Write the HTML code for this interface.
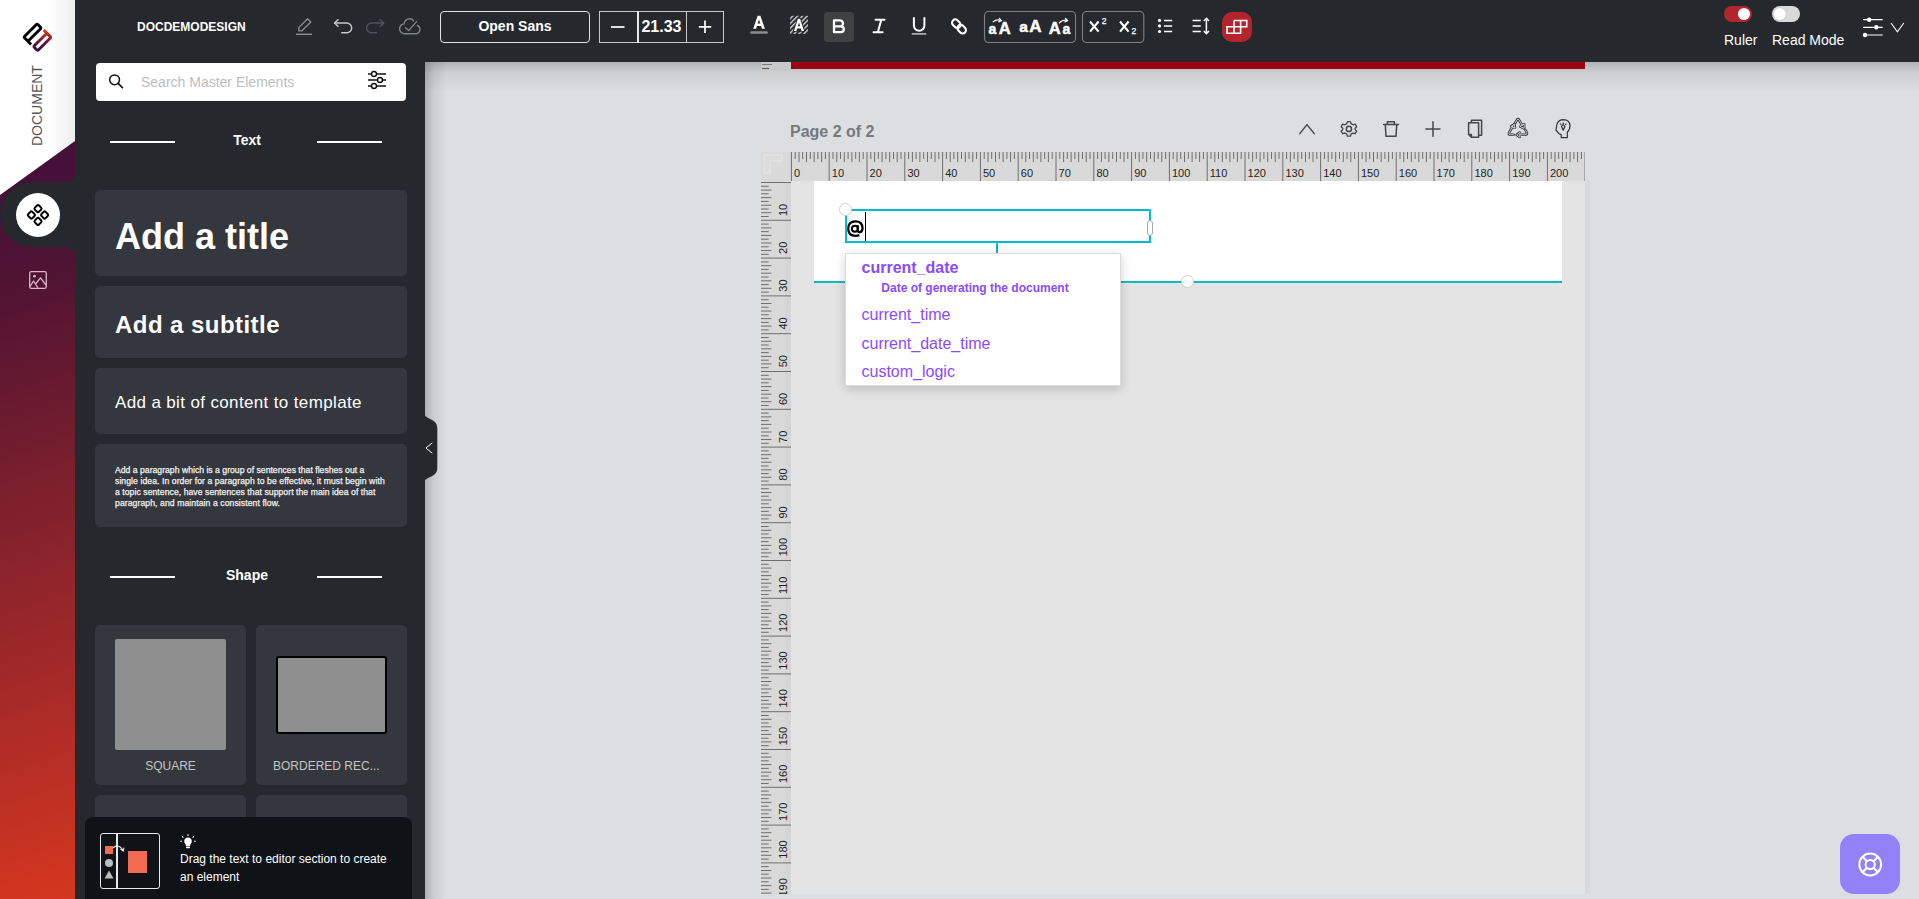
<!DOCTYPE html>
<html><head><meta charset="utf-8">
<style>
*{box-sizing:border-box}
html,body{margin:0;padding:0}
body{width:1919px;height:899px;overflow:hidden;position:relative;background:#dbdfe2;font-family:"Liberation Sans",sans-serif}
.a{position:absolute}
svg{display:block;overflow:visible}
/* sidebar */
#side{left:0;top:0;width:75px;height:899px;background:linear-gradient(161deg,#340b37 0px,#46103a 180px,#521432 285px,#7c202d 474px,#a62a28 664px,#cf3520 843px,#d5371f 875px)}
#sidewhite{left:0;top:0;width:75px;height:200px;background:linear-gradient(to right,#fff 0,#fff 50px,#f7f7f7 62px,#ececec 74px,#f2f2f2 75px);clip-path:polygon(0 0,75px 0,75px 141px,0 195px)}
/* panel */
#panel{left:75px;top:62px;width:350px;height:837px;background:#25282d}
#topbar{left:75px;top:0;width:1844px;height:62px;background:#25282d}
.card{position:absolute;left:95px;width:312px;background:#34373d;border-radius:5px}
.hline{position:absolute;height:2px;width:65px;background:#fff}
.ttl{position:absolute;color:#fff;font-weight:700;font-size:13px;line-height:16px;white-space:nowrap}
</style></head>
<body>
<!-- SIDEBAR -->
<div id="side" class="a"></div>
<div id="sidewhite" class="a"></div>
<!-- logo -->
<svg class="a" style="left:18px;top:18px" width="40" height="40" viewBox="0 0 40 40">
  <defs><linearGradient id="lg1" gradientUnits="userSpaceOnUse" x1="16" y1="33" x2="33" y2="16"><stop offset="0" stop-color="#24064f"/><stop offset="0.5" stop-color="#6a1438"/><stop offset="0.8" stop-color="#b92a22"/><stop offset="1" stop-color="#e53b1a"/></linearGradient></defs>
  <g fill="none" stroke-width="2.7" stroke-linejoin="round" transform="translate(19.4 19.4) scale(1.07) translate(-19.4 -19.4)">
    <path transform="translate(14.85 14.85) rotate(-45)" stroke="#000" d="M-8.8 6.9 V-1.5 Q-8.8 -2.75 -7.55 -2.75 H7.55 Q8.8 -2.75 8.8 -1.5 V1.5 Q8.8 2.75 7.55 2.75 H-8.8"/>
    <path transform="translate(23.95 23.6) rotate(-45)" stroke="url(#lg1)" d="M8.8 -6.9 V1.5 Q8.8 2.75 7.55 2.75 H-7.55 Q-8.8 2.75 -8.8 1.5 V-1.5 Q-8.8 -2.75 -7.55 -2.75 H8.8"/>
  </g>
</svg>
<div class="a" style="left:30px;top:146px;width:0;height:0"><div style="position:absolute;left:0;top:0;transform-origin:0 0;transform:rotate(-90deg);font-size:14px;line-height:14px;color:#555;white-space:nowrap;letter-spacing:0px">DOCUMENT</div></div>
<!-- active tab -->
<div class="a" style="left:0;top:182px;width:75px;height:65px;background:#25282d;border-radius:33px 0 0 33px"></div>
<div class="a" style="left:67px;top:174px;width:8px;height:8px;background:radial-gradient(circle at 0 0,transparent 7.5px,#25282d 8px)"></div>
<div class="a" style="left:67px;top:247px;width:8px;height:8px;background:radial-gradient(circle at 0 100%,transparent 7.5px,#25282d 8px)"></div>
<div class="a" style="left:16px;top:193px;width:44px;height:44px;border-radius:50%;background:#fff"></div>
<svg class="a" style="left:26px;top:203px" width="24" height="24" viewBox="0 0 24 24">
  <g fill="none" stroke="#000" stroke-width="2" stroke-linejoin="round" transform="translate(12 12)">
    <rect x="-2.9" y="-9.3" width="5.8" height="5.8" rx="1.4" transform="rotate(45 0 -6.4)"/>
    <rect x="-9.5" y="-2.9" width="5.8" height="5.8" rx="1.4" transform="rotate(45 -6.6 0)"/>
    <rect x="3.7" y="-2.9" width="5.8" height="5.8" rx="1.4" transform="rotate(45 6.6 0)"/>
    <rect x="-2.9" y="3.5" width="5.8" height="5.8" rx="1.4" transform="rotate(45 0 6.4)"/>
  </g>
</svg>
<!-- image icon -->
<svg class="a" style="left:29px;top:271px" width="18" height="18" viewBox="0 0 18 18">
  <g fill="none" stroke="#d6b6c8" stroke-width="1.3" stroke-linejoin="round">
    <rect x="0.7" y="0.7" width="16.6" height="16.6" rx="1.5"/>
    <path d="M1 15.5 L4.5 10 L9 17"/>
    <path d="M6.5 13 L11.5 6.8 L17 14"/>
  </g>
  <circle cx="5.5" cy="5.2" r="1.4" fill="#d6b6c8"/>
</svg>

<!-- TOP BAR -->
<div id="topbar" class="a"></div>
<div class="a" style="left:137px;top:21px;font-size:12px;line-height:12px;font-weight:700;color:#fff;white-space:nowrap">DOCDEMODESIGN</div>
<div class="a" style="left:440px;top:11px;width:150px;height:32px;border:1px solid #e2e2e2;border-radius:4px"></div>
<div class="a" style="left:440px;top:19px;width:150px;text-align:center;font-size:14px;line-height:14px;font-weight:700;color:#fff;white-space:nowrap">Open Sans</div>
<div class="a" style="left:599px;top:11px;width:125px;height:32px;border:1px solid #c9c9c9"></div>
<div class="a" style="left:637px;top:11px;width:1.5px;height:32px;background:#e6e6e6"></div>
<div class="a" style="left:686px;top:11px;width:1px;height:32px;background:#c9c9c9"></div>
<div class="a" style="left:637px;top:19px;width:49px;text-align:center;font-size:16px;line-height:16px;font-weight:700;color:#fff;white-space:nowrap">21.33</div>
<svg class="a" style="left:0;top:0" width="1919" height="62" viewBox="0 0 1919 62">
  <!-- pencil -->
  <g fill="none" stroke="#8b8e91" stroke-width="1.3" stroke-linejoin="round">
    <path d="M298.8 30.8 L298.8 27.6 L307.6 18.8 L310.8 22 L302 30.8 Z"/>
  </g>
  <path d="M296 34.3 H312" stroke="#8b8e91" stroke-width="1.4"/>
  <!-- undo -->
  <g fill="none" stroke="#c8c9ca" stroke-width="1.4" stroke-linejoin="round">
    <path d="M338.5 19.2 L334.5 23 L338.5 26.8"/>
    <path d="M334.8 23 H346.8 A4.9 4.9 0 0 1 346.8 32.8 H341.2"/>
  </g>
  <!-- redo -->
  <g fill="none" stroke="#50545a" stroke-width="1.4" stroke-linejoin="round">
    <path d="M379.8 19.2 L383.8 23 L379.8 26.8"/>
    <path d="M383.5 23 H371.5 A4.9 4.9 0 0 0 371.5 32.8 H377.1"/>
  </g>
  <!-- cloud check -->
  <g fill="none" stroke="#7f8489" stroke-width="1.4" stroke-linejoin="round" stroke-linecap="round">
    <path d="M413.6 20.8 A5.3 5.3 0 0 0 404.2 23.9 A4.4 4.4 0 0 0 404.8 33.7 H415.6 A4.3 4.3 0 0 0 417.4 25.5"/>
    <path d="M405.6 27.8 L408.6 30.6 L416.6 21.6"/>
  </g>
  <!-- minus plus -->
  <path d="M611 27 H624.5" stroke="#fff" stroke-width="1.7"/>
  <path d="M698.8 26.9 H711.2 M705 20.6 V33.1" stroke="#fff" stroke-width="1.7"/>
  <!-- text color A -->
  <path fill="#fff" fill-rule="evenodd" d="M753.2 28.8 L757.6 15.8 L760.4 15.8 L764.9 28.8 L762 28.8 L761.1 26 L756.9 26 L756 28.8 Z M757.7 23.6 L760.3 23.6 L759 19.4 Z"/>
  <path d="M751.5 32.4 H766.6" stroke="#8a8d90" stroke-width="2.5" stroke-linecap="round"/>
  <!-- highlight -->
  <defs>
    <pattern id="hatch" width="3.4" height="3.4" patternUnits="userSpaceOnUse" patternTransform="rotate(45)">
      <rect width="1.4" height="3.4" fill="#d0d0d0"/>
    </pattern>
    <clipPath id="hclip"><rect x="790" y="15.8" width="18" height="18.2"/></clipPath>
  </defs>
  <rect x="790" y="15.8" width="18" height="18.2" fill="url(#hatch)"/>
  <path fill="#25282d" d="M792.6 31.8 L797.4 17.6 L800.6 17.6 L805.4 31.8 Z"/>
  <path fill="#fff" fill-rule="evenodd" d="M793.9 31 L797.9 18.8 L800.1 18.8 L804.1 31 L801.6 31 L800.8 28.5 L797.2 28.5 L796.4 31 Z M797.9 26.3 L800.1 26.3 L799 22.4 Z"/>
  <!-- bold -->
  <rect x="824" y="12" width="30" height="30" rx="4" fill="#404142"/>
  <path fill="none" stroke="#fff" stroke-width="2.3" stroke-linejoin="round" d="M834 20.4 H840 A3 3 0 0 1 840 26.4 H834 Z M834 26.4 H840.9 A2.9 2.9 0 0 1 840.9 32.2 H834 Z"/>
  <!-- italic -->
  <path fill="none" stroke="#fff" stroke-width="2" stroke-linecap="round" d="M875.5 19.7 H884.6 M873.5 32.2 H882.6 M881.2 20 L877.9 32"/>
  <!-- underline -->
  <path fill="none" stroke="#fff" stroke-width="2" d="M913.9 17.3 V25.6 A5.25 5.25 0 0 0 924.4 25.6 V17.3"/>
  <path d="M911.7 33.9 H926.2" stroke="#b9b9b9" stroke-width="1.6"/>
  <!-- link -->
  <g fill="none" stroke="#fff" stroke-width="2.1" transform="rotate(-45 959 26.4)">
    <rect x="955.7" y="17.9" width="6.6" height="9.4" rx="3.3"/>
    <rect x="955.7" y="25.5" width="6.6" height="9.4" rx="3.3"/>
  </g>
  <!-- case group -->
  <rect x="984.5" y="11.5" width="91" height="31" rx="4" fill="none" stroke="#7d8084" stroke-width="1.1"/>
  <rect x="1082.5" y="11.5" width="61.3" height="31" rx="4" fill="none" stroke="#7d8084" stroke-width="1.1"/>
  <g font-family="Liberation Sans" font-weight="700" fill="#fff" stroke="#fff" stroke-width="0.5">
    <text x="988.6" y="33.8" font-size="14">a</text>
    <text x="998.8" y="33.8" font-size="16.5">A</text>
    <text x="1019.2" y="31.7" font-size="15.5">a</text>
    <text x="1029.2" y="31.7" font-size="17">A</text>
    <text x="1048.8" y="33.8" font-size="16.5">A</text>
    <text x="1062.4" y="33.8" font-size="14">a</text>
  </g>
  <g fill="none" stroke="#fff" stroke-width="1.3" stroke-linecap="round">
    <path d="M993.2 21.8 Q996.5 19 1000.8 20.4"/>
    <path d="M999.4 18.4 L1001.3 20.6 L998.8 21.8"/>
    <path d="M1059.4 22.8 Q1062.8 19.5 1067 20.4"/>
    <path d="M1065.6 18.5 L1067.5 20.6 L1065 21.8"/>
  </g>
  <!-- super sub -->
  <path fill="none" stroke="#fff" stroke-width="2.1" d="M1090 21.5 L1098.6 31.6 M1098.6 21.5 L1090 31.6 M1120 21.5 L1128.6 31.6 M1128.6 21.5 L1120 31.6"/>
  <text x="1101.7" y="24.4" font-family="Liberation Sans" font-size="8.6" fill="#fff" stroke="#fff" stroke-width="0.25">2</text>
  <text x="1131.6" y="34.4" font-family="Liberation Sans" font-size="8.6" fill="#fff" stroke="#fff" stroke-width="0.25">2</text>
  <!-- list -->
  <g fill="#fff"><circle cx="1159.5" cy="20.4" r="1.6"/><circle cx="1159.5" cy="25.9" r="1.6"/><circle cx="1159.5" cy="31.5" r="1.6"/></g>
  <path d="M1164 20.4 H1172.2 M1164 25.9 H1172.2 M1164 31.5 H1172.2" stroke="#fff" stroke-width="1.5"/>
  <!-- line height -->
  <path d="M1192.6 20.4 H1200.8 M1192.6 25.9 H1200.8 M1192.6 31.5 H1200.8 M1206.4 18.8 V33.2" stroke="#fff" stroke-width="1.5" fill="none"/>
  <path d="M1203.8 21 L1206.4 18.4 L1209 21 M1203.8 31 L1206.4 33.6 L1209 31" stroke="#fff" stroke-width="1.5" fill="none"/>
  <!-- red table btn -->
  <rect x="1222" y="12" width="30" height="30" rx="10" fill="#b3252c"/>
  <path fill="none" stroke="#fff" stroke-width="1.6" d="M1227 26.8 H1240.6 V33.2 H1227 Z M1234 20.5 V33.2 M1234 20.5 H1246.7 V26.8 H1240.6 M1240.6 20.5 V26.8"/>
  <!-- toggles -->
  <rect x="1724" y="6" width="28" height="16" rx="8" fill="#b3252c"/>
  <circle cx="1744" cy="14" r="6.1" fill="#fff"/>
  <rect x="1772" y="6" width="28" height="16" rx="8" fill="#d9d9d9"/>
  <circle cx="1779.7" cy="14" r="6.6" fill="#bdbdbd" opacity="0.5"/>
  <circle cx="1779.7" cy="14" r="6.1" fill="#fff"/>
  <!-- settings -->
  <path d="M1863 19.7 H1882.7 M1863 27.3 H1882.7 M1863 35 H1882.7" stroke="#fff" stroke-width="1.2"/>
  <g fill="#fff"><circle cx="1869.2" cy="19.7" r="2.2"/><circle cx="1876.3" cy="27.3" r="2.2"/><circle cx="1865" cy="35" r="2.2"/></g>
  <path d="M1891 23 L1897.4 31.8 L1903.8 23" fill="none" stroke="#fff" stroke-width="1.1"/>
</svg>
<div class="a" style="left:1724px;top:33px;font-size:14px;line-height:14px;color:#fff;white-space:nowrap">Ruler</div>
<div class="a" style="left:1772px;top:33px;font-size:14px;line-height:14px;color:#fff;white-space:nowrap">Read Mode</div>

<!-- PANEL -->
<div id="panel" class="a"></div>
<!-- search -->
<div class="a" style="left:96px;top:63px;width:310px;height:38px;background:#fff;border-radius:4px"></div>
<svg class="a" style="left:108px;top:73px" width="16" height="16" viewBox="0 0 16 16">
  <circle cx="6.6" cy="6.8" r="4.9" fill="none" stroke="#111" stroke-width="1.5"/>
  <path d="M10.2 10.4 L14.4 14.6" stroke="#111" stroke-width="1.6" stroke-linecap="round"/>
</svg>
<div class="a" style="left:141px;top:75px;font-size:14px;line-height:14px;color:#bdbdc0;white-space:nowrap">Search Master Elements</div>
<svg class="a" style="left:366px;top:69px" width="22" height="22" viewBox="0 0 22 22">
  <g stroke="#111" stroke-width="1.4" fill="none"><path d="M2 5 H20 M2 11 H20 M2 17 H20"/></g>
  <g fill="#fff" stroke="#111" stroke-width="1.4"><circle cx="8" cy="5" r="2.5"/><circle cx="14" cy="11" r="2.5"/><circle cx="8" cy="17" r="2.5"/></g>
</svg>
<!-- Text section -->
<div class="hline" style="left:110px;top:141px"></div>
<div class="hline" style="left:317px;top:141px"></div>
<div class="ttl" style="left:176px;top:133px;width:142px;text-align:center;font-size:14px;line-height:14px">Text</div>
<div class="card" style="top:190px;height:86px"></div>
<div class="a" style="left:115px;top:219px;font-size:36px;line-height:36px;font-weight:700;color:#fff;white-space:nowrap">Add a title</div>
<div class="card" style="top:286px;height:72px"></div>
<div class="a" style="left:115px;top:313px;font-size:24px;line-height:24px;font-weight:700;color:#fff;white-space:nowrap;letter-spacing:0.45px">Add a subtitle</div>
<div class="card" style="top:368px;height:66px"></div>
<div class="a" style="left:115px;top:394px;font-size:17px;line-height:17px;color:#fff;white-space:nowrap;letter-spacing:0.36px">Add a bit of content to template</div>
<div class="card" style="top:444px;height:83px"></div>
<div class="a" style="left:115px;top:465px;font-size:8.65px;line-height:11px;color:#f2f2f2;white-space:nowrap;-webkit-text-stroke:0.25px #f2f2f2;letter-spacing:0.015px">Add a paragraph which is a group of sentences that fleshes out a</div>
<div class="a" style="left:115px;top:476px;font-size:8.65px;line-height:11px;color:#f2f2f2;white-space:nowrap;-webkit-text-stroke:0.25px #f2f2f2;letter-spacing:0.072px">single idea. In order for a paragraph to be effective, it must begin with</div>
<div class="a" style="left:115px;top:487px;font-size:8.65px;line-height:11px;color:#f2f2f2;white-space:nowrap;-webkit-text-stroke:0.25px #f2f2f2;letter-spacing:0.058px">a topic sentence, have sentences that support the main idea of that</div>
<div class="a" style="left:115px;top:498px;font-size:8.65px;line-height:11px;color:#f2f2f2;white-space:nowrap;-webkit-text-stroke:0.25px #f2f2f2;letter-spacing:0.083px">paragraph, and maintain a consistent flow.</div>

<!-- Shape section -->
<div class="hline" style="left:110px;top:576px"></div>
<div class="hline" style="left:317px;top:576px"></div>
<div class="ttl" style="left:176px;top:568px;width:142px;text-align:center;font-size:14px;line-height:14px">Shape</div>
<div class="card" style="top:625px;height:160px;width:151px"></div>
<div class="card" style="top:625px;height:160px;width:151px;left:256px"></div>
<div class="card" style="top:795px;height:104px;width:151px"></div>
<div class="card" style="top:795px;height:104px;width:151px;left:256px"></div>
<div class="a" style="left:115px;top:639px;width:111px;height:111px;background:#8f8f8f;border-radius:2px"></div>
<div class="a" style="left:276px;top:656px;width:111px;height:78px;background:#8f8f8f;border:2px solid #000;border-radius:3px"></div>
<div class="a" style="left:95px;top:760px;width:151px;text-align:center;font-size:12px;line-height:12px;color:#c4c4c4;white-space:nowrap">SQUARE</div>
<div class="a" style="left:273px;top:760px;font-size:12px;line-height:12px;color:#c4c4c4;white-space:nowrap">BORDERED REC...</div>
<!-- tip -->
<div class="a" style="left:85px;top:817px;width:327px;height:100px;background:#0f1317;border-radius:8px"></div>
<div class="a" style="left:100px;top:833px;width:60px;height:56px;border:1.5px solid #e8e8e8;border-radius:3px"></div>
<div class="a" style="left:116px;top:834px;width:1.5px;height:54px;background:#e8e8e8"></div>
<div class="a" style="left:105px;top:846px;width:8px;height:8px;background:#f26a4f"></div>
<div class="a" style="left:105px;top:859px;width:8px;height:8px;border-radius:50%;background:#bdbdbd"></div>
<svg class="a" style="left:104px;top:870px" width="10" height="9" viewBox="0 0 10 9"><path d="M5 0.5 L9.5 8.5 H0.5 Z" fill="#bdbdbd"/></svg>
<div class="a" style="left:128px;top:851px;width:19px;height:22px;background:#f26a4f"></div>
<svg class="a" style="left:112px;top:844px" width="16" height="10" viewBox="0 0 16 10"><path d="M1 4 Q6 -1 11 6" fill="none" stroke="#e8e8e8" stroke-width="1.1"/><path d="M8.5 5 L11.3 7 L12 3.6" fill="none" stroke="#e8e8e8" stroke-width="1.1"/></svg>
<svg class="a" style="left:180px;top:834px" width="16" height="16" viewBox="0 0 16 16">
  <path d="M8 3.5 C5.5 3.5 4.2 5.4 4.2 7.2 C4.2 8.8 5.3 9.6 5.7 10.6 L5.9 12 H10.1 L10.3 10.6 C10.7 9.6 11.8 8.8 11.8 7.2 C11.8 5.4 10.5 3.5 8 3.5 Z" fill="#fff"/>
  <rect x="6" y="12.6" width="4" height="1.6" rx="0.6" fill="#fff"/>
  <path d="M8 0.3 V2 M2.2 2.4 L3.4 3.6 M13.8 2.4 L12.6 3.6 M0.3 7.3 H2 M14 7.3 H15.7" stroke="#fff" stroke-width="1.1"/>
</svg>
<div class="a" style="left:180px;top:850px;font-size:12px;line-height:18px;color:#fff;white-space:nowrap">Drag the text to editor section to create<br>an element</div>

<!-- CANVAS -->
<div class="a" style="left:425px;top:62px;width:1494px;height:30px;background:linear-gradient(to bottom,rgba(0,0,0,0.2),rgba(0,0,0,0.07) 35%,rgba(0,0,0,0))"></div>
<div class="a" style="left:425px;top:62px;width:22px;height:837px;background:linear-gradient(to right,rgba(0,0,0,0.2),rgba(0,0,0,0.08) 40%,rgba(0,0,0,0))"></div>
<div class="a" style="left:761px;top:62px;width:30px;height:7px;background:#c8c8c8"></div>
<div class="a" style="left:762px;top:64px;width:10px;height:1px;background:#7a7a7a"></div>
<div class="a" style="left:762px;top:68px;width:7px;height:1px;background:#555"></div>
<div class="a" style="left:791px;top:62px;width:794px;height:7px;background:#9c0013"></div>
<div class="a" style="left:790px;top:124px;font-size:16px;line-height:16px;font-weight:700;color:#76797d;white-space:nowrap">Page 2 of 2</div>
<svg class="a" style="left:0;top:0" width="1919" height="150" viewBox="0 0 1919 150">
  <g fill="none" stroke="#43464a" stroke-width="1.5" stroke-linejoin="round" stroke-linecap="round">
    <path d="M1299.8 133.6 L1307 124.6 L1314.2 133.6"/>
    <path d="M1433 121.8 V136.2 M1425.9 129 H1440"/>
    <path d="M1383.6 124.6 H1398.4 M1387.4 124.4 V121.8 H1394.4 V124.4 M1385.3 125 L1386 136.3 H1396 L1396.7 125"/>
    <path d="M1471.4 122 V120.3 H1481.6 V135.2 H1479.4"/>
    <path d="M1468.6 122.7 H1478.6 V137.3 H1471.4 L1468.6 134.4 Z M1468.8 134.4 H1471.4 V137"/>
    <circle cx="1348.9" cy="128.9" r="2.6"/>
    <path transform="translate(1348.9 128.9) scale(0.88) translate(-1348.9 -128.9)" d="M1347.2 120.6 H1350.6 L1351.3 123 L1353.6 124.2 L1356 123.4 L1357.7 126.4 L1355.9 128.2 V129.6 L1357.7 131.4 L1356 134.4 L1353.6 133.6 L1351.3 134.8 L1350.6 137.2 H1347.2 L1346.5 134.8 L1344.2 133.6 L1341.8 134.4 L1340.1 131.4 L1341.9 129.6 V128.2 L1340.1 126.4 L1341.8 123.4 L1344.2 124.2 L1346.5 123 Z"/>
  </g>
  <g fill="none" stroke-linejoin="round" stroke-linecap="round">
    <g transform="translate(1508 118)">
      <g stroke="#2f3236" stroke-width="2.6">
        <path d="M5.6 16.8 H2.4 Q0.2 16.6 1.2 14.4 L4.9 8"/>
        <path d="M3.2 8.4 L6.3 6.2 L7 9.6 Z"/>
        <path d="M7.2 4.8 L9 1.8 Q10 0.4 11 1.8 L14.2 7.4"/>
        <path d="M12.2 8.6 L16.1 10.4 L16.2 6.4 Z"/>
        <path d="M17.4 12 L18.8 14.6 Q19.4 16.8 17 16.8 H11.6"/>
        <path d="M11.6 14.6 L8.6 16.8 L11.6 19 Z"/>
      </g>
      <g stroke="#dbdfe2" stroke-width="0.9">
        <path d="M5.6 16.8 H2.4 Q0.2 16.6 1.2 14.4 L4.9 8"/>
        <path d="M3.2 8.4 L6.3 6.2 L7 9.6 Z"/>
        <path d="M7.2 4.8 L9 1.8 Q10 0.4 11 1.8 L14.2 7.4"/>
        <path d="M12.2 8.6 L16.1 10.4 L16.2 6.4 Z"/>
        <path d="M17.4 12 L18.8 14.6 Q19.4 16.8 17 16.8 H11.6"/>
        <path d="M11.6 14.6 L8.6 16.8 L11.6 19 Z"/>
      </g>
    </g>
    <g stroke="#2f3236" stroke-width="1.2">
      <path d="M1561.2 137.6 H1567.3 V132.2 Q1570.2 129.4 1570 125.6 Q1569.6 119.6 1563.2 119.6 Q1557 119.8 1556.6 126.4 L1555.9 130.2 L1557.6 132 Q1558.6 134.2 1561.2 134.6 Z"/>
      <path d="M1561.5 126.4 L1563.2 130.2 L1564.9 126.4 L1563.2 124.6 Z M1560.9 124.4 L1560.3 123.8 M1565.5 124.4 L1566.1 123.8 M1563.2 123.7 V122.8"/>
    </g>
  </g>
</svg>
<svg class="a" style="left:0;top:0" width="1919" height="899" viewBox="0 0 1919 899">
  <defs><clipPath id="pc"><rect x="761" y="152" width="824" height="742"/></clipPath></defs>
  <g clip-path="url(#pc)">
  <rect x="761" y="152" width="30" height="30" fill="#dadada"/>
  <path d="M763.2 154H783V162H771V173.7H763.2Z" fill="#e1e1e1"/><path d="M765.2 156H781V160H769V171.7H765.2Z" fill="#dcdcdc"/>
  <rect x="791" y="152" width="794" height="29" fill="#d9d9d9"/>
  <rect x="761" y="182" width="30" height="712" fill="#d9d9d9"/>
  <rect x="785" y="182" width="6" height="712" fill="#d2d2d2" opacity="0.6"/>
  <path d="M791.4 152V181 M795.2 152V159 M799.0 152V162 M802.7 152V159 M806.5 152V162 M810.3 152V159 M814.1 152V162 M817.9 152V159 M821.6 152V162 M825.4 152V159 M829.2 152V181 M833.0 152V159 M836.8 152V162 M840.5 152V159 M844.3 152V162 M848.1 152V159 M851.9 152V162 M855.7 152V159 M859.4 152V162 M863.2 152V159 M867.0 152V181 M870.8 152V159 M874.6 152V162 M878.3 152V159 M882.1 152V162 M885.9 152V159 M889.7 152V162 M893.5 152V159 M897.2 152V162 M901.0 152V159 M904.8 152V181 M908.6 152V159 M912.4 152V162 M916.1 152V159 M919.9 152V162 M923.7 152V159 M927.5 152V162 M931.3 152V159 M935.0 152V162 M938.8 152V159 M942.6 152V181 M946.4 152V159 M950.2 152V162 M953.9 152V159 M957.7 152V162 M961.5 152V159 M965.3 152V162 M969.1 152V159 M972.8 152V162 M976.6 152V159 M980.4 152V181 M984.2 152V159 M988.0 152V162 M991.7 152V159 M995.5 152V162 M999.3 152V159 M1003.1 152V162 M1006.9 152V159 M1010.6 152V162 M1014.4 152V159 M1018.2 152V181 M1022.0 152V159 M1025.8 152V162 M1029.5 152V159 M1033.3 152V162 M1037.1 152V159 M1040.9 152V162 M1044.7 152V159 M1048.4 152V162 M1052.2 152V159 M1056.0 152V181 M1059.8 152V159 M1063.6 152V162 M1067.3 152V159 M1071.1 152V162 M1074.9 152V159 M1078.7 152V162 M1082.5 152V159 M1086.2 152V162 M1090.0 152V159 M1093.8 152V181 M1097.6 152V159 M1101.4 152V162 M1105.1 152V159 M1108.9 152V162 M1112.7 152V159 M1116.5 152V162 M1120.3 152V159 M1124.0 152V162 M1127.8 152V159 M1131.6 152V181 M1135.4 152V159 M1139.2 152V162 M1142.9 152V159 M1146.7 152V162 M1150.5 152V159 M1154.3 152V162 M1158.1 152V159 M1161.8 152V162 M1165.6 152V159 M1169.4 152V181 M1173.2 152V159 M1177.0 152V162 M1180.7 152V159 M1184.5 152V162 M1188.3 152V159 M1192.1 152V162 M1195.9 152V159 M1199.6 152V162 M1203.4 152V159 M1207.2 152V181 M1211.0 152V159 M1214.8 152V162 M1218.5 152V159 M1222.3 152V162 M1226.1 152V159 M1229.9 152V162 M1233.7 152V159 M1237.4 152V162 M1241.2 152V159 M1245.0 152V181 M1248.8 152V159 M1252.6 152V162 M1256.3 152V159 M1260.1 152V162 M1263.9 152V159 M1267.7 152V162 M1271.5 152V159 M1275.2 152V162 M1279.0 152V159 M1282.8 152V181 M1286.6 152V159 M1290.4 152V162 M1294.1 152V159 M1297.9 152V162 M1301.7 152V159 M1305.5 152V162 M1309.3 152V159 M1313.0 152V162 M1316.8 152V159 M1320.6 152V181 M1324.4 152V159 M1328.2 152V162 M1331.9 152V159 M1335.7 152V162 M1339.5 152V159 M1343.3 152V162 M1347.1 152V159 M1350.8 152V162 M1354.6 152V159 M1358.4 152V181 M1362.2 152V159 M1366.0 152V162 M1369.7 152V159 M1373.5 152V162 M1377.3 152V159 M1381.1 152V162 M1384.9 152V159 M1388.6 152V162 M1392.4 152V159 M1396.2 152V181 M1400.0 152V159 M1403.8 152V162 M1407.5 152V159 M1411.3 152V162 M1415.1 152V159 M1418.9 152V162 M1422.7 152V159 M1426.4 152V162 M1430.2 152V159 M1434.0 152V181 M1437.8 152V159 M1441.6 152V162 M1445.3 152V159 M1449.1 152V162 M1452.9 152V159 M1456.7 152V162 M1460.5 152V159 M1464.2 152V162 M1468.0 152V159 M1471.8 152V181 M1475.6 152V159 M1479.4 152V162 M1483.1 152V159 M1486.9 152V162 M1490.7 152V159 M1494.5 152V162 M1498.3 152V159 M1502.0 152V162 M1505.8 152V159 M1509.6 152V181 M1513.4 152V159 M1517.2 152V162 M1520.9 152V159 M1524.7 152V162 M1528.5 152V159 M1532.3 152V162 M1536.1 152V159 M1539.8 152V162 M1543.6 152V159 M1547.4 152V181 M1551.2 152V159 M1555.0 152V162 M1558.7 152V159 M1562.5 152V162 M1566.3 152V159 M1570.1 152V162 M1573.9 152V159 M1577.6 152V162 M1581.4 152V159" stroke="#6e6e6e" stroke-width="1"/>
  <path d="M761 182.5H791 M761 186.3H768.7 M761 190.1H771.4 M761 193.8H768.7 M761 197.6H771.4 M761 201.4H768.7 M761 205.2H771.4 M761 209.0H768.7 M761 212.7H771.4 M761 216.5H768.7 M761 220.3H791 M761 224.1H768.7 M761 227.9H771.4 M761 231.6H768.7 M761 235.4H771.4 M761 239.2H768.7 M761 243.0H771.4 M761 246.8H768.7 M761 250.5H771.4 M761 254.3H768.7 M761 258.1H791 M761 261.9H768.7 M761 265.7H771.4 M761 269.4H768.7 M761 273.2H771.4 M761 277.0H768.7 M761 280.8H771.4 M761 284.6H768.7 M761 288.3H771.4 M761 292.1H768.7 M761 295.9H791 M761 299.7H768.7 M761 303.5H771.4 M761 307.2H768.7 M761 311.0H771.4 M761 314.8H768.7 M761 318.6H771.4 M761 322.4H768.7 M761 326.1H771.4 M761 329.9H768.7 M761 333.7H791 M761 337.5H768.7 M761 341.3H771.4 M761 345.0H768.7 M761 348.8H771.4 M761 352.6H768.7 M761 356.4H771.4 M761 360.2H768.7 M761 363.9H771.4 M761 367.7H768.7 M761 371.5H791 M761 375.3H768.7 M761 379.1H771.4 M761 382.8H768.7 M761 386.6H771.4 M761 390.4H768.7 M761 394.2H771.4 M761 398.0H768.7 M761 401.7H771.4 M761 405.5H768.7 M761 409.3H791 M761 413.1H768.7 M761 416.9H771.4 M761 420.6H768.7 M761 424.4H771.4 M761 428.2H768.7 M761 432.0H771.4 M761 435.8H768.7 M761 439.5H771.4 M761 443.3H768.7 M761 447.1H791 M761 450.9H768.7 M761 454.7H771.4 M761 458.4H768.7 M761 462.2H771.4 M761 466.0H768.7 M761 469.8H771.4 M761 473.6H768.7 M761 477.3H771.4 M761 481.1H768.7 M761 484.9H791 M761 488.7H768.7 M761 492.5H771.4 M761 496.2H768.7 M761 500.0H771.4 M761 503.8H768.7 M761 507.6H771.4 M761 511.4H768.7 M761 515.1H771.4 M761 518.9H768.7 M761 522.7H791 M761 526.5H768.7 M761 530.3H771.4 M761 534.0H768.7 M761 537.8H771.4 M761 541.6H768.7 M761 545.4H771.4 M761 549.2H768.7 M761 552.9H771.4 M761 556.7H768.7 M761 560.5H791 M761 564.3H768.7 M761 568.1H771.4 M761 571.8H768.7 M761 575.6H771.4 M761 579.4H768.7 M761 583.2H771.4 M761 587.0H768.7 M761 590.7H771.4 M761 594.5H768.7 M761 598.3H791 M761 602.1H768.7 M761 605.9H771.4 M761 609.6H768.7 M761 613.4H771.4 M761 617.2H768.7 M761 621.0H771.4 M761 624.8H768.7 M761 628.5H771.4 M761 632.3H768.7 M761 636.1H791 M761 639.9H768.7 M761 643.7H771.4 M761 647.4H768.7 M761 651.2H771.4 M761 655.0H768.7 M761 658.8H771.4 M761 662.6H768.7 M761 666.3H771.4 M761 670.1H768.7 M761 673.9H791 M761 677.7H768.7 M761 681.5H771.4 M761 685.2H768.7 M761 689.0H771.4 M761 692.8H768.7 M761 696.6H771.4 M761 700.4H768.7 M761 704.1H771.4 M761 707.9H768.7 M761 711.7H791 M761 715.5H768.7 M761 719.3H771.4 M761 723.0H768.7 M761 726.8H771.4 M761 730.6H768.7 M761 734.4H771.4 M761 738.2H768.7 M761 741.9H771.4 M761 745.7H768.7 M761 749.5H791 M761 753.3H768.7 M761 757.1H771.4 M761 760.8H768.7 M761 764.6H771.4 M761 768.4H768.7 M761 772.2H771.4 M761 776.0H768.7 M761 779.7H771.4 M761 783.5H768.7 M761 787.3H791 M761 791.1H768.7 M761 794.9H771.4 M761 798.6H768.7 M761 802.4H771.4 M761 806.2H768.7 M761 810.0H771.4 M761 813.8H768.7 M761 817.5H771.4 M761 821.3H768.7 M761 825.1H791 M761 828.9H768.7 M761 832.7H771.4 M761 836.4H768.7 M761 840.2H771.4 M761 844.0H768.7 M761 847.8H771.4 M761 851.6H768.7 M761 855.3H771.4 M761 859.1H768.7 M761 862.9H791 M761 866.7H768.7 M761 870.5H771.4 M761 874.2H768.7 M761 878.0H771.4 M761 881.8H768.7 M761 885.6H771.4 M761 889.4H768.7 M761 893.1H771.4" stroke="#6e6e6e" stroke-width="1"/>
  <g font-family="Liberation Sans" font-size="11" fill="#1e1e1e">
  <text x="794.0" y="176.8">0</text><text x="831.8" y="176.8">10</text><text x="869.6" y="176.8">20</text><text x="907.4" y="176.8">30</text><text x="945.2" y="176.8">40</text><text x="983.0" y="176.8">50</text><text x="1020.8" y="176.8">60</text><text x="1058.6" y="176.8">70</text><text x="1096.4" y="176.8">80</text><text x="1134.2" y="176.8">90</text><text x="1172.0" y="176.8">100</text><text x="1209.8" y="176.8">110</text><text x="1247.6" y="176.8">120</text><text x="1285.4" y="176.8">130</text><text x="1323.2" y="176.8">140</text><text x="1361.0" y="176.8">150</text><text x="1398.8" y="176.8">160</text><text x="1436.6" y="176.8">170</text><text x="1474.4" y="176.8">180</text><text x="1512.2" y="176.8">190</text><text x="1550.0" y="176.8">200</text>
  <text transform="translate(786.6 216.1) rotate(-90)">10</text><text transform="translate(786.6 253.9) rotate(-90)">20</text><text transform="translate(786.6 291.7) rotate(-90)">30</text><text transform="translate(786.6 329.5) rotate(-90)">40</text><text transform="translate(786.6 367.3) rotate(-90)">50</text><text transform="translate(786.6 405.1) rotate(-90)">60</text><text transform="translate(786.6 442.9) rotate(-90)">70</text><text transform="translate(786.6 480.7) rotate(-90)">80</text><text transform="translate(786.6 518.5) rotate(-90)">90</text><text transform="translate(786.6 556.3) rotate(-90)">100</text><text transform="translate(786.6 594.1) rotate(-90)">110</text><text transform="translate(786.6 631.9) rotate(-90)">120</text><text transform="translate(786.6 669.7) rotate(-90)">130</text><text transform="translate(786.6 707.5) rotate(-90)">140</text><text transform="translate(786.6 745.3) rotate(-90)">150</text><text transform="translate(786.6 783.1) rotate(-90)">160</text><text transform="translate(786.6 820.9) rotate(-90)">170</text><text transform="translate(786.6 858.7) rotate(-90)">180</text><text transform="translate(786.6 896.5) rotate(-90)">190</text>
  </g>
  </g>
</svg>
<div class="a" style="left:791px;top:181px;width:794px;height:713px;background:#e4e4e4"></div>
<div class="a" style="left:1585px;top:181px;width:8px;height:713px;background:linear-gradient(to right,rgba(0,0,0,0.035),rgba(0,0,0,0))"></div>
<div class="a" style="left:1584px;top:152px;width:1px;height:29px;background:#a8a8a8"></div>
<div class="a" style="left:814px;top:181px;width:748px;height:101px;background:#fff"></div>
<div class="a" style="left:814px;top:281px;width:748px;height:2px;background:#00bcc6"></div>

<!-- text box -->
<div class="a" style="left:845px;top:209px;width:306px;height:34px;border:2px solid #00bcc6"></div>
<div class="a" style="left:996px;top:243px;width:2px;height:11px;background:#00bcc6"></div>
<svg class="a" style="left:847px;top:220px" width="17" height="17" viewBox="0 0 17 17">
  <g fill="none" stroke="#000" stroke-width="2.3">
    <circle cx="7.9" cy="8.7" r="3" stroke-width="2"/>
    <path d="M10.8 5.2 V10.3 Q10.8 12.2 12.6 12.2 Q15.5 12.2 15.5 8.3 Q15.5 1.3 8.4 1.3 Q1.2 1.3 1.2 8.7 Q1.2 15.8 8.6 15.8 Q10.6 15.8 12.4 15.2"/>
  </g>
</svg>
<div class="a" style="left:865px;top:212px;width:1px;height:29px;background:#000"></div>
<div class="a" style="left:839px;top:203px;width:13px;height:13px;border-radius:50%;background:#fff;border:1px solid #cfcfcf"></div>
<div class="a" style="left:1147px;top:220px;width:6px;height:16px;border-radius:3px;background:#fff;border:1px solid #a9a9a9"></div>
<div class="a" style="left:1181px;top:275px;width:13px;height:13px;border-radius:50%;background:#fff;border:1px solid #cfcfcf"></div>
<!-- dropdown -->
<div class="a" style="left:845px;top:253px;width:276px;height:133px;background:#fff;border:1px solid #dcdcdc;box-shadow:0 3px 10px rgba(0,0,0,0.18)"></div>
<div class="a" style="left:861.5px;top:260px;font-size:16px;line-height:16px;font-weight:700;color:#8a4bff;white-space:nowrap">current_date</div>
<div class="a" style="left:881.3px;top:281.5px;font-size:12px;line-height:12px;font-weight:700;color:#8a4bff;white-space:nowrap">Date of generating the document</div>
<div class="a" style="left:861.5px;top:307.4px;font-size:16px;line-height:16px;color:#8a4bff;white-space:nowrap">current_time</div>
<div class="a" style="left:861.5px;top:336.4px;font-size:16px;line-height:16px;color:#8a4bff;white-space:nowrap">current_date_time</div>
<div class="a" style="left:861.5px;top:364.4px;font-size:16px;line-height:16px;color:#8a4bff;white-space:nowrap">custom_logic</div>
<!-- collapse handle -->
<svg class="a" style="left:0;top:0" width="1919" height="899" viewBox="0 0 1919 899">
  <path d="M424 413 C425 420 437.3 418 437.3 428 V468 C437.3 478 425 476 424 483 Z" fill="#25282d"/>
  <path d="M432.3 442.9 L425.8 448 L432.3 453.2" fill="none" stroke="#fff" stroke-width="1"/>
  <rect x="1840" y="834" width="60" height="60" rx="14" fill="#9281f7"/>
  <g fill="none" stroke="#fff" stroke-width="2">
    <circle cx="1870.2" cy="864.5" r="10.9"/>
    <circle cx="1870.2" cy="864.5" r="4.6"/>
    <path d="M1866.9 861.2 L1862.5 856.8 M1873.5 861.2 L1877.9 856.8 M1866.9 867.8 L1862.5 872.2 M1873.5 867.8 L1877.9 872.2"/>
  </g>
</svg>

</body></html>
